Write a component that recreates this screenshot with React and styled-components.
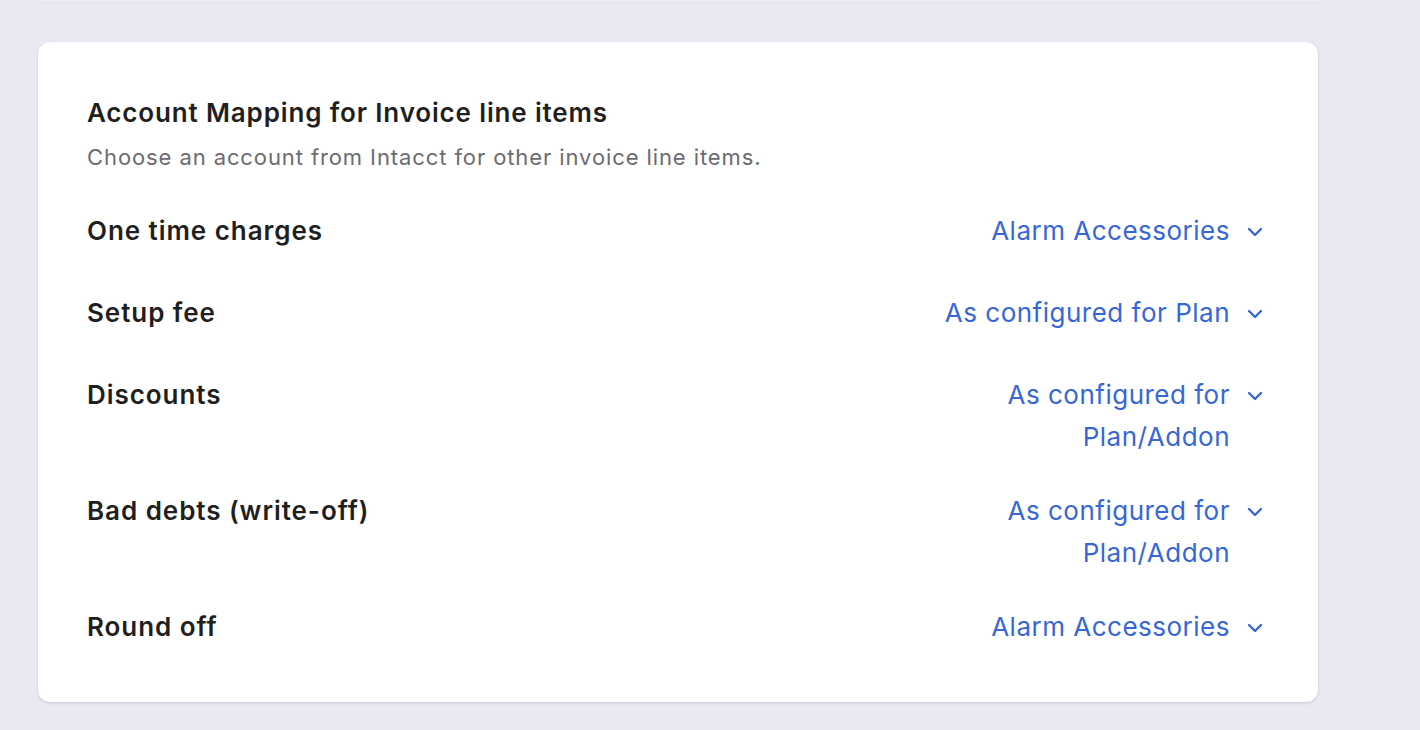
import React from 'react';
import styled, { createGlobalStyle } from 'styled-components';

const GlobalStyle = createGlobalStyle`
  html, body {
    margin: 0;
    padding: 0;
    background: #e9e9f2;
    font-family: Inter, "Noto Sans", "Liberation Sans", sans-serif;
    -webkit-font-smoothing: antialiased;
  }
`;

const Page = styled.div`
  width: 1420px;
  height: 730px;
  overflow: hidden;
  background: #e9e9f2;
  box-sizing: border-box;
`;

const PrevCardEdge = styled.div`
  height: 2px;
  margin: 0 102px 0 38px;
  background: #ececf4;
  border-radius: 0 0 12px 12px;
  box-shadow: 0 1px 2px rgba(0, 0, 0, 0.04);
`;

const Card = styled.section`
  margin: 40px 102px 0 38px;
  background: #fff;
  border-radius: 12px;
  box-shadow: 0 1px 3px rgba(20, 20, 60, 0.16);
  padding: 55px 54px 46px 49px;
`;

const Title = styled.h2`
  margin: 0;
  font-size: 26px;
  line-height: 32px;
  font-weight: 600;
  color: #1f1f22;
  letter-spacing: 0.85px;
`;

const Subtitle = styled.p`
  margin: 14px 0 0;
  font-size: 22px;
  line-height: 28px;
  color: #6b6b70;
  letter-spacing: 0.9px;
`;

const List = styled.div`
  margin-top: 39px;
  display: flex;
  flex-direction: column;
  gap: 32px;
`;

const Row = styled.div`
  display: flex;
  justify-content: space-between;
  align-items: flex-start;
  min-height: 50px;
`;

const Label = styled.div`
  font-size: 26px;
  line-height: 42px;
  font-weight: 600;
  color: #1f1f22;
  letter-spacing: 0.95px;
`;

const Select = styled.button`
  display: flex;
  align-items: flex-start;
  gap: 16px;
  border: 0;
  padding: 0;
  background: none;
  cursor: pointer;
  font: inherit;
  color: #3767d6;
`;

const Value = styled.span`
  max-width: 300px;
  text-align: right;
  font-size: 26px;
  line-height: 42px;
  letter-spacing: 0.5px;
`;

const Chevron = styled.svg`
  width: 18px;
  height: 42px;
  flex: none;
`;

const rows = [
  { label: 'One time charges', value: 'Alarm Accessories' },
  { label: 'Setup fee', value: 'As configured for Plan' },
  { label: 'Discounts', value: 'As configured for Plan/Addon' },
  { label: 'Bad debts (write-off)', value: 'As configured for Plan/Addon' },
  { label: 'Round off', value: 'Alarm Accessories' },
];

function App() {
  return (
    <Page>
      <GlobalStyle />
      <PrevCardEdge />
      <Card>
        <Title>Account Mapping for Invoice line items</Title>
        <Subtitle>Choose an account from Intacct for other invoice line items.</Subtitle>
        <List>
          {rows.map((r) => (
            <Row key={r.label}>
              <Label>{r.label}</Label>
              <Select>
                <Value>{r.value}</Value>
                <Chevron viewBox="0 0 18 42">
                  <path
                    d="M3 19 L9 25 L15 19"
                    fill="none"
                    stroke="#3767d6"
                    strokeWidth="2.4"
                    strokeLinecap="round"
                    strokeLinejoin="round"
                  />
                </Chevron>
              </Select>
            </Row>
          ))}
        </List>
      </Card>
    </Page>
  );
}

export default App;
